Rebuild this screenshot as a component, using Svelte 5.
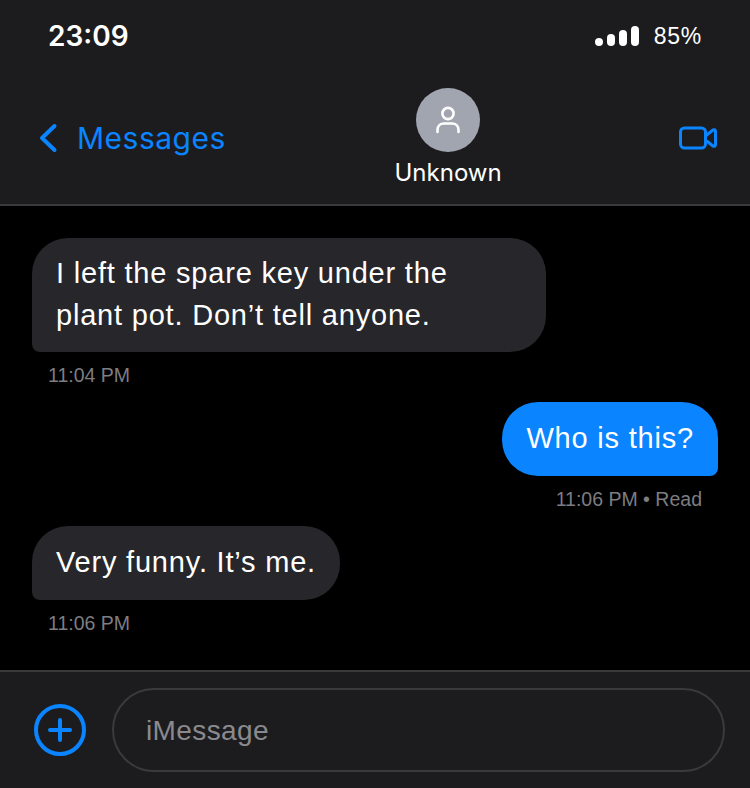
<script>
	const messages = [
		{ id: 1, from: 'them', text: 'I left the spare key under the plant pot. Don’t tell anyone.', time: '11:04 PM' },
		{ id: 2, from: 'me', text: 'Who is this?', time: '11:06 PM • Read' },
		{ id: 3, from: 'them', text: 'Very funny. It’s me.', time: '11:06 PM' }
	];
	const signal = [8, 12, 16, 20];
</script>

<div class="phone">
	<header>
		<div class="status">
			<span class="clock">23:09</span>
			<div class="status-right">
				<div class="bars">
					{#each signal as h}
						<i style="height: {h}px"></i>
					{/each}
				</div>
				<span class="battery">85%</span>
			</div>
		</div>
		<div class="nav">
			<div class="back">
				<svg width="20" height="30" viewBox="0 0 20 30" fill="none">
					<path d="M16.5 3 L4 15 L16.5 27" stroke="#0a84ff" stroke-width="4" stroke-linecap="round" stroke-linejoin="round" />
				</svg>
				<span>Messages</span>
			</div>
			<div class="contact">
				<div class="avatar">
					<svg width="26" height="30" viewBox="0 0 26 30" fill="none" stroke="#fff" stroke-width="2.6" stroke-linecap="round">
						<circle cx="13" cy="8.5" r="5.6" />
						<path d="M2.500 27 V25 C2.500 21 5.500 18.500 9 18.500 H17 C20.500 18.500 23.500 21 23.500 25 V27" />
					</svg>
				</div>
				<span class="name">Unknown</span>
			</div>
			<svg class="video" width="38" height="24" viewBox="0 0 38 24" fill="none" stroke="#0a84ff" stroke-width="3" stroke-linejoin="round">
				<rect x="1.5" y="2" width="25" height="20" rx="4" />
				<path d="M26.500 10 L34 4 Q36.500 3 36.500 5.500 V18.500 Q36.500 21 34 20 L26.500 14 Z" />
			</svg>
		</div>
	</header>

	<main>
		{#each messages as m (m.id)}
			<div class="msg {m.from}">
				<div class="bubble">{m.text}</div>
				<div class="time">{m.time}</div>
			</div>
		{/each}
	</main>

	<footer>
		<svg width="52" height="52" viewBox="0 0 52 52" fill="none" stroke="#0a84ff" stroke-linecap="round">
			<circle cx="26" cy="26" r="24" stroke-width="4" />
			<path d="M16 26 H36 M26 16 V36" stroke-width="4" />
		</svg>
		<div class="input">iMessage</div>
	</footer>
</div>

<style>
	:global(body) {
		background: #000;
	}

	.phone {
		width: 750px;
		height: 788px;
		display: flex;
		flex-direction: column;
		background: #000;
		color: #fff;
		font-family: Inter, "Liberation Sans", sans-serif;
		overflow: hidden;
	}

	header {
		height: 206px;
		box-sizing: border-box;
		flex: none;
		background: #1c1c1e;
		border-bottom: 2px solid #3a3a3c;
	}

	.status {
		height: 72px;
		box-sizing: border-box;
		padding: 0 48px;
		display: flex;
		align-items: center;
		justify-content: space-between;
	}

	.clock {
		font-size: 28px;
		font-weight: 600;
	}

	.status-right {
		display: flex;
		align-items: center;
		gap: 15px;
	}

	.bars {
		display: flex;
		align-items: flex-end;
		gap: 4px;
	}

	.bars i {
		display: block;
		width: 8px;
		border-radius: 4px;
		background: #fff;
	}

	.battery {
		font-size: 23px;
		font-family: "Liberation Sans", sans-serif;
		letter-spacing: 0.7px;
	}

	.nav {
		height: 132px;
		padding: 0 33px 0 38px;
		box-sizing: border-box;
		display: flex;
		align-items: center;
	}

	.back {
		flex: 0 0 356.5px;
		display: flex;
		align-items: center;
		gap: 19px;
		color: #0a84ff;
		font-size: 30px;
		letter-spacing: 0.5px;
	}

	.back svg {
		display: block;
	}

	.contact {
		display: flex;
		flex-direction: column;
		align-items: center;
	}

	.avatar {
		width: 64px;
		height: 64px;
		border-radius: 50%;
		background: #a0a5b0;
		display: flex;
		align-items: center;
		justify-content: center;
	}

	.name {
		margin-top: 6px;
		font-size: 24px;
		line-height: 30px;
	}

	.video {
		margin-left: auto;
	}

	main {
		flex: 1;
		min-height: 0;
		padding: 32px 32px 0;
		display: flex;
		flex-direction: column;
	}

	.msg {
		display: flex;
		flex-direction: column;
		align-items: flex-start;
		margin-bottom: 12px;
	}

	.msg.me {
		align-items: flex-end;
	}

	.bubble {
		box-sizing: border-box;
		max-width: 514px;
		min-height: 74px;
		padding: 14px 24px 16px;
		display: flex;
		align-items: center;
		background: #27272b;
		border-radius: 36px 36px 36px 8px;
		font-family: "Liberation Sans", sans-serif;
		font-size: 29px;
		line-height: 42px;
		letter-spacing: 0.8px;
	}

	.me .bubble {
		background: #0a84ff;
		border-radius: 36px 36px 8px 36px;
	}

	.time {
		margin-top: 8px;
		padding: 0 16px;
		font-family: "Liberation Sans", sans-serif;
		font-size: 19.5px;
		line-height: 30px;
		color: #7d7d82;
	}

	footer {
		height: 118px;
		box-sizing: border-box;
		flex: none;
		background: #1c1c1e;
		border-top: 2px solid #3a3a3c;
		padding: 16px 25px 16px 34px;
		display: flex;
		align-items: center;
		gap: 26px;
	}

	footer svg {
		flex: none;
	}

	.input {
		flex: 1;
		height: 84px;
		box-sizing: border-box;
		border: 2px solid #3a3a3c;
		border-radius: 42px;
		padding: 2px 32px 0;
		display: flex;
		align-items: center;
		font-family: "Liberation Sans", sans-serif;
		font-size: 28px;
		letter-spacing: 0.4px;
		color: #8a8a8e;
	}
</style>
